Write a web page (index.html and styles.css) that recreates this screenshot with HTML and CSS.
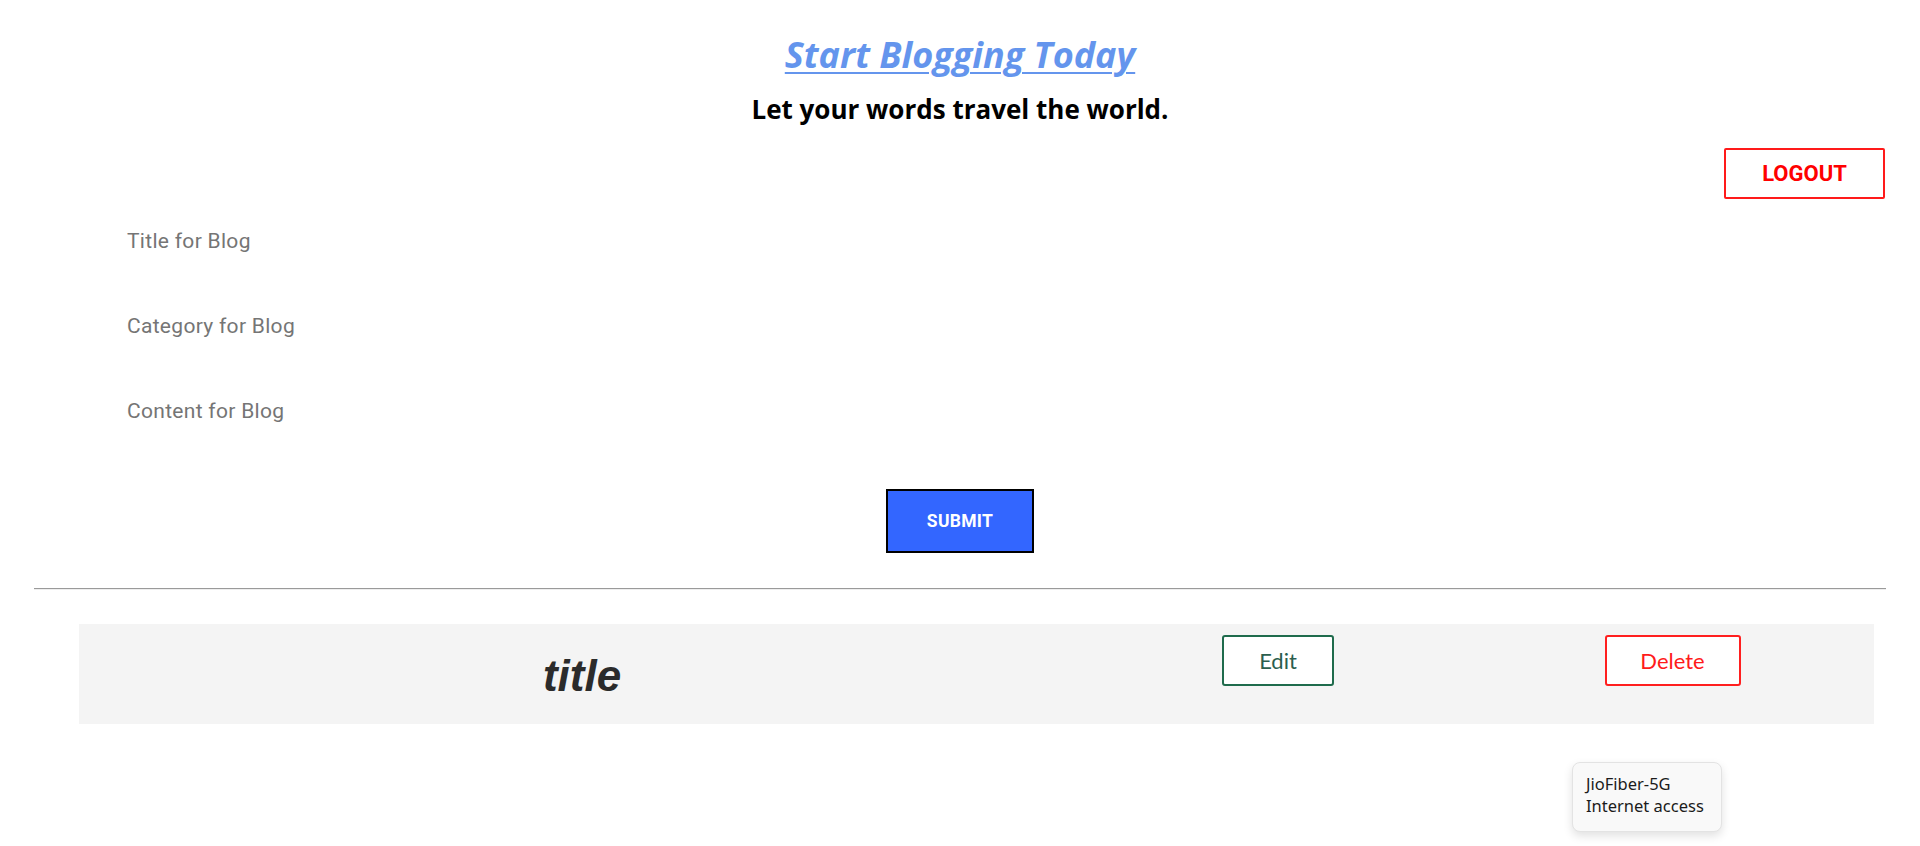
FILE: index.html
```html
<!DOCTYPE html>
<html lang="en">
<head>
<meta charset="utf-8">
<title>Start Blogging Today</title>
<link rel="stylesheet" href="styles.css">
</head>
<body>
<header class="hero">
  <h1 class="hero-title"><a href="#">Start Blogging Today</a></h1>
  <p class="hero-sub">Let your words travel the world.</p>
</header>
<div class="toolbar">
  <button class="btn-logout">LOGOUT</button>
</div>
<form class="blog-form">
  <label class="field">Title for Blog</label>
  <label class="field">Category for Blog</label>
  <label class="field">Content for Blog</label>
  <div class="submit-row">
    <button type="button" class="btn-submit">SUBMIT</button>
  </div>
</form>
<hr class="divider">
<section class="posts">
  <article class="post-card">
    <h2 class="post-title">title</h2>
    <div class="post-action"><button class="btn-edit">Edit</button></div>
    <div class="post-action"><button class="btn-delete">Delete</button></div>
  </article>
</section>
<div class="net-tip">
  <div>JioFiber-5G</div>
  <div>Internet access</div>
</div>
</body>
</html>
```
FILE: styles.css
```css
html, body {
  margin: 0;
  padding: 0;
  background: #ffffff;
}
body {
  font-family: Roboto, "Liberation Sans", sans-serif;
  position: relative;
  min-height: 846px;
}
.hero {
  text-align: center;
  padding-top: 35px;
}
.hero-title {
  margin: 0;
  font-family: "Open Sans", Lato, sans-serif;
  font-weight: 700;
  font-style: italic;
  font-size: 36px;
  line-height: 40px;
}
.hero-title a {
  color: #6495ed;
  text-decoration: underline;
  text-decoration-thickness: 2px;
  text-underline-offset: 4px;
}
.hero-sub {
  margin: 19px 0 0;
  font-family: "Open Sans", Lato, sans-serif;
  font-weight: 700;
  font-size: 26px;
  line-height: 30px;
  color: #000;
}
.toolbar {
  display: flex;
  justify-content: flex-end;
  padding: 24px 35px 0 0;
}
.btn-logout {
  width: 161px;
  height: 51px;
  background: #fff;
  border: 2px solid #ff1a1a;
  border-radius: 2px;
  color: #ff0000;
  font-family: Roboto, sans-serif;
  font-weight: 700;
  font-size: 22px;
  cursor: pointer;
}
.blog-form {
  display: flex;
  flex-direction: column;
  padding: 30px 0 0 127px;
}
.field {
  display: block;
  height: 85px;
  font-size: 21px;
  letter-spacing: 0.3px;
  line-height: 24px;
  color: #757575;
}
.field:last-of-type {
  height: 24px;
}
.submit-row {
  display: flex;
  justify-content: center;
  margin: 66px 0 0 -127px;
}
.btn-submit {
  width: 148px;
  height: 64px;
  background: #3366ff;
  border: 2px solid #000;
  color: #fff;
  font-family: Roboto, sans-serif;
  font-weight: 700;
  font-size: 17.5px;
  letter-spacing: 0.3px;
}
.divider {
  margin: 35px 34px 0;
  border: 0;
  border-top: 1px solid #9a9a9a;
  border-bottom: 1px solid #eeeeee;
  height: 0;
}
.posts {
  padding: 34px 46px 0 79px;
}
.post-card {
  display: grid;
  grid-template-columns: 1006px 386px 1fr;
  align-items: start;
  background: #f4f4f4;
  padding: 11px 0 24px;
}
.post-title {
  margin: 17px 0 0;
  text-align: center;
  font-family: "Liberation Sans", Arial, sans-serif;
  font-weight: 700;
  font-style: italic;
  font-size: 44px;
  line-height: 48px;
  color: #2b2b2b;
}
.post-action {
  display: flex;
  justify-content: center;
}
.btn-edit, .btn-delete {
  height: 51px;
  background: #fff;
  border-radius: 3px;
  font-family: Lato, "Open Sans", sans-serif;
  font-weight: 400;
  font-size: 22px;
}
.btn-edit {
  width: 112px;
  border: 2px solid #1f6b4c;
  color: #2b5e4e;
}
.btn-delete {
  width: 136px;
  border: 2px solid #ff1f1f;
  color: #ff1a1a;
}
.net-tip {
  position: absolute;
  left: 1572px;
  top: 762px;
  width: 150px;
  height: 70px;
  box-sizing: border-box;
  padding: 10px 0 0 13px;
  background: #f9f9f9;
  border: 1px solid #e3e3e3;
  border-radius: 8px;
  box-shadow: 0 4px 10px rgba(0, 0, 0, 0.12);
  font-family: "Noto Sans", "Open Sans", sans-serif;
  font-size: 16.5px;
  line-height: 22px;
  color: #1b1b1b;
}
```
